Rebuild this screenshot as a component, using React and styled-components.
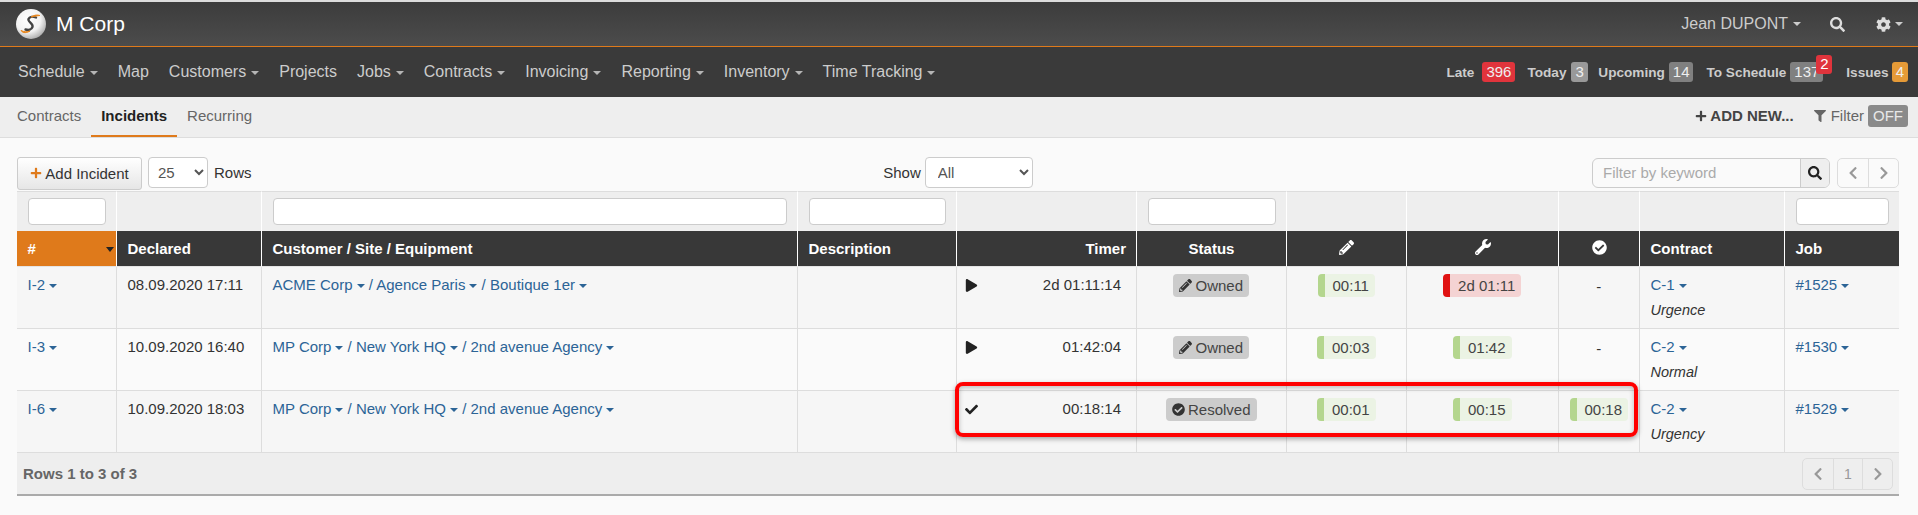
import React from "react";
import styled, { createGlobalStyle } from "styled-components";
import { FaPencilAlt, FaWrench, FaCheckCircle, FaSearch, FaCog, FaPlay, FaCheck, FaPlus, FaFilter, FaChevronLeft, FaChevronRight } from "react-icons/fa";

const Global = createGlobalStyle`
  html, body { margin: 0; padding: 0; height: 515px; overflow: hidden; background: #fafafa; }
  body { font-family: "Liberation Sans", Arial, sans-serif; font-size: 15px; color: #333; }
  * { box-sizing: border-box; }
`;

const Page = styled.div`
  width: 1918px; height: 515px; border-top: 2px solid #dcdcdc; background: #fafafa; display: flex; flex-direction: column;
`;
const TopBar = styled.header`
  height: 45px; flex: none; display: flex; align-items: center; justify-content: space-between;
  background: linear-gradient(#3c3c3c, #4c4c4c); border-bottom: 1px solid #df7a1b; padding: 0 15px 0 16px; color: #ddd;
`;
const Brand = styled.div`
  display: flex; align-items: center; gap: 10px; color: #fff; font-size: 21px;
`;
const TopRight = styled.div`
  display: flex; align-items: center; font-size: 16px; color: #ccc;
`;
const Caret = styled.span`
  display: inline-block; width: 0; height: 0; vertical-align: middle; margin-left: ${p => p.$ml ?? 4}px;
  border-left: ${p => p.$s ?? 4}px solid transparent; border-right: ${p => p.$s ?? 4}px solid transparent;
  border-top: ${p => p.$s ?? 4}px solid ${p => p.$c ?? "currentColor"};
`;
const TopIcon = styled.span`
  display: inline-flex; align-items: center; margin-left: ${p => p.$ml}px; font-size: 15px; color: #ddd;
`;
const NavBar = styled.nav`
  height: 50px; flex: none; background: #3a3a3a; display: flex; align-items: center; justify-content: space-between; padding: 0 10px 0 18px;
`;
const NavList = styled.div`
  display: flex; gap: 20px; font-size: 16px; color: #ccc;
`;
const NavItem = styled.span`
  white-space: nowrap;
`;
const Counters = styled.div`
  display: flex; align-items: center; position: relative; color: #ccc; font-weight: bold; font-size: 13.6px;
`;
const Counter = styled.span`
  display: flex; align-items: center; gap: ${p => p.$gap ?? 4}px; margin-left: ${p => p.$ml ?? 13}px; position: relative;
`;
const CountBadge = styled.span`
  display: inline-block; height: 20px; line-height: 20px; padding: 0 4px; border-radius: 3px; font-weight: normal; font-size: 15px; color: #eee;
  background: ${p => p.$bg};
`;
const SupBadge = styled.span`
  position: absolute; left: 110px; top: -7px; width: 16px; height: 19px; line-height: 18px; text-align: center; border-radius: 3px; background: #e0343c; color: #fff; font-weight: normal; font-size: 15px;
`;
const SubBar = styled.div`
  height: 41px; flex: none; background: #eee; border-bottom: 1px solid #ddd; display: flex; justify-content: space-between; padding: 0 10px 0 7px; align-items: stretch;
`;
const Tabs = styled.div`
  display: flex; 
`;
const Tab = styled.div`
  padding: 0 10px; line-height: 37px; height: 40px; color: ${p => p.$active ? "#222" : "#666"}; font-weight: ${p => p.$active ? "bold" : "normal"};
  border-bottom: 2px solid ${p => p.$active ? "#df7a1b" : "transparent"}; 
`;
const SubActions = styled.div`
  display: flex; align-items: center; color: #555; padding-bottom: 3px;
`;
const AddNew = styled.span`
  display: flex; align-items: center; gap: 3px; font-weight: bold; font-size: 15px; color: #444; margin-right: 20px;
`;
const FilterToggle = styled.span`
  display: flex; align-items: center; gap: 5px; color: #666; font-size: 15px; margin-right: 4px;
`;
const OffPill = styled.span`
  height: 22px; width: 40px; line-height: 22px; text-align: center; background: #8a8a8a; color: #e8e8e8; border-radius: 3px; font-size: 15px;
`;
const Content = styled.main`
  padding: 19px 19px 0 17px; display: flex; flex-direction: column;
`;
const Toolbar = styled.div`
  display: grid; grid-template-columns: 1fr auto 1fr; height: 33px; align-items: start; margin-bottom: 1px;
`;
const ToolGroup = styled.div`
  display: flex; align-items: center; gap: ${p => p.$gap ?? 6}px; justify-content: ${p => p.$end ? "flex-end" : "flex-start"}; height: 31px;
`;
const AddButton = styled.button`
  width: 125px; height: 33px; display: flex; align-items: center; justify-content: center; gap: 3px; font: 15px "Liberation Sans", Arial, sans-serif; color: #333;
  border: 1px solid #ccc; border-radius: 3px; background: linear-gradient(#fff, #e6e6e6); padding: 0; margin-top: 1px;
  svg { color: #df7a1b; }
`;
const Select = styled.select`
  width: ${p => p.$w}px; height: 31px; font: 15px "Liberation Sans", Arial, sans-serif; color: #555; background: #fff; border: 1px solid #ccc; border-radius: 4px; padding: 0 6px 0 ${p => p.$pl ?? 8}px;
`;
const SearchGroup = styled.div`
  display: flex; width: 238px; height: 30px; border: 1px solid #ccc; border-radius: 6px; overflow: hidden; background: #fafafa; margin-right: 7px;
`;
const SearchInput = styled.input`
  flex: 1; min-width: 0; border: 0; background: transparent; padding: 0 10px; font: 15px "Liberation Sans", Arial, sans-serif;
  &::placeholder { color: #aaa; }
`;
const SearchBtn = styled.span`
  width: 29px; display: flex; align-items: center; justify-content: center; border-left: 1px solid #ccc; background: #eee; color: #222; font-size: 14px;
`;
const Pager = styled.div`
  display: flex; height: ${p => p.$h}px; border: 1px solid #ddd; border-radius: 5px; overflow: hidden; background: ${p => p.$bg ?? "#fafafa"};
`;
const PagerCell = styled.span`
  width: ${p => p.$w}px; display: flex; align-items: center; justify-content: center; color: #999; font-size: 14px;
  & + & { border-left: 1px solid #ddd; }
`;
const TableWrap = styled.div`
  position: relative; width: 1882px;
`;
const Table = styled.table`
  width: 1882px; table-layout: fixed; border-collapse: separate; border-spacing: 0;
`;
const Col = styled.col`
  width: ${p => p.$w}px;
`;
const FilterCell = styled.th`
  height: 40px; padding: 6px 10px 0 10.5px; vertical-align: top; background: #eee; border-top: 1px solid #ddd; border-right: 1px solid #fff;
  &:last-child { border-right: 0; }
`;
const FilterInput = styled.input`
  display: block; width: 100%; height: 27px; border: 1px solid #ccc; border-radius: 4px; background: #fff;
`;
const Head = styled.th`
  height: 36px; padding: 0 ${p => p.$right ? 10 : 10.5}px; background: ${p => p.$active ? "#df7a1b" : "#383838"}; color: #fff; font-size: 15px; font-weight: bold;
  text-align: ${p => p.$align ?? "left"}; border-right: 1px solid #fff; border-bottom: 1px solid #e4e4e4; position: relative;
  &:last-child { border-right: 0; }
`;
const SortCaret = styled.span`
  position: absolute; right: 2px; top: 16px; width: 0; height: 0; border-left: 4px solid transparent; border-right: 4px solid transparent; border-top: 5px solid #222;
`;
const Row = styled.tr`
  background: ${p => p.$alt ? "#fafafa" : "#f6f6f6"};
`;
const Cell = styled.td`
  height: 62px; padding: 7px 11px 0 10.5px; vertical-align: top; line-height: 22px; border-bottom: 1px solid #ddd; border-right: 1px solid #ddd; font-size: 15px; white-space: nowrap;
  text-align: ${p => p.$align ?? "left"};
  &:last-child { border-right: 0; }
`;
const Link = styled.span`
  color: #2c6496;
`;
const TimerBox = styled.div`
  display: flex; justify-content: space-between; align-items: center; padding: 0 4px 0 0; margin-left: -3px; height: 22px;
  svg { font-size: 13px; color: #222; }
`;
const Status = styled.span`
  display: inline-flex; align-items: center; gap: 3px; height: 23px; padding: 0 6px; background: #ccc; border-radius: 4px; color: #444; svg { font-size: 13px; color: #333; }
`;
const Duration = styled.span`
  display: inline-block; height: 23px; line-height: 23px; padding: 0 6px 0 8px; border-left: 7px solid ${p => p.$late ? "#e01212" : "#b4d68e"};
  border-radius: 4px; background: ${p => p.$late ? "#f4d3d3" : "#ebf3e4"}; color: #444;
`;
const ContractType = styled.em`
  display: block; margin-top: 3px; font-size: 14.5px; color: #333;
`;
const Dash = styled.span`
  position: relative; top: 2px;
`;
const Highlight = styled.div`
  position: absolute; left: 938px; top: 191px; width: 683px; height: 55px; border: 4px solid #f00; border-radius: 8px; pointer-events: none;
  box-shadow: 0 2px 5px rgba(0,0,0,.35), inset 0 2px 5px rgba(0,0,0,.25);
`;
const Footer = styled.div`
  width: 1882px; height: 43px; background: #eee; border-bottom: 2px solid #aaa; display: flex; align-items: center; justify-content: space-between; padding: 0 6px 0 6px;
`;
const RowsInfo = styled.span`
  font-weight: bold; font-size: 15px; color: #666; 
`;

const Logo = () => (
  <svg width="30" height="30" viewBox="0 0 30 30">
    <defs>
      <radialGradient id="lg" cx="40%" cy="35%" r="70%">
        <stop offset="0%" stopColor="#fff" />
        <stop offset="60%" stopColor="#f2f2f2" />
        <stop offset="100%" stopColor="#a8a8a8" />
      </radialGradient>
    </defs>
    <circle cx="15" cy="15" r="15" fill="url(#lg)" />
    <path d="M20 8.5c-3-1.2-6.5-.8-7.5 1.5-1 3 5 4.5 4 8-.8 2.6-4 3.3-7 2.5" fill="none" stroke="#444" strokeWidth="2.4" strokeLinecap="round" />
    <path d="M15 8c3-2 6-2.5 9-1.5-3 .2-5 .8-9 1.5z" fill="#e8871e" stroke="#e8871e" strokeWidth="1" />
    <path d="M5 21.5c3 1.5 6 1.5 9 .5-3 2-7 2.5-9-.5z" fill="#e8871e" stroke="#e8871e" strokeWidth="1" />
  </svg>
);

const C = () => <Caret $ml={4} $s={4} $c="#2c6496" />;
const widths = [100, 145, 536, 159, 180, 150, 120, 152, 81, 145, 114];
const navs = [["Schedule", 1], ["Map"], ["Customers", 1], ["Projects"], ["Jobs", 1], ["Contracts", 1], ["Invoicing", 1], ["Reporting", 1], ["Inventory", 1], ["Time Tracking", 1]];
const rows = [
  { id: "I-2", date: "08.09.2020 17:11", path: ["ACME Corp", "Agence Paris", "Boutique 1er"], timer: "2d 01:11:14", state: "Owned", a: "00:11", b: "2d 01:11", late: true, c: null, con: "C-1", type: "Urgence", job: "#1525" },
  { id: "I-3", date: "10.09.2020 16:40", path: ["MP Corp", "New York HQ", "2nd avenue Agency"], timer: "01:42:04", state: "Owned", a: "00:03", b: "01:42", c: null, con: "C-2", type: "Normal", job: "#1530", alt: true },
  { id: "I-6", date: "10.09.2020 18:03", path: ["MP Corp", "New York HQ", "2nd avenue Agency"], timer: "00:18:14", state: "Resolved", a: "00:01", b: "00:15", c: "00:18", con: "C-2", type: "Urgency", job: "#1529", done: true },
];

export default function App() {
  return (
    <Page>
      <Global />
      <TopBar>
        <Brand><Logo />M Corp</Brand>
        <TopRight>
          Jean DUPONT<Caret $ml={5} />
          <TopIcon $ml={29}><FaSearch /></TopIcon>
          <TopIcon $ml={31}><FaCog /></TopIcon><Caret $ml={4} />
        </TopRight>
      </TopBar>
      <NavBar>
        <NavList>
          {navs.map(([n, c]) => <NavItem key={n}>{n}{c && <Caret $ml={5} $c="#b5b5b5" />}</NavItem>)}
        </NavList>
        <Counters>
          <Counter $gap={8}>Late <CountBadge $bg="#e0343c">396</CountBadge></Counter>
          <Counter $gap={5} $ml={12}>Today <CountBadge $bg="#999">3</CountBadge></Counter>
          <Counter $ml={10.5}>Upcoming <CountBadge $bg="#808080">14</CountBadge></Counter>
          <Counter>To Schedule <CountBadge $bg="#808080">137</CountBadge><SupBadge>2</SupBadge></Counter>
          <Counter $ml={23} $gap={3}>Issues <CountBadge $bg="#e59a37">4</CountBadge></Counter>
        </Counters>
      </NavBar>
      <SubBar>
        <Tabs>
          <Tab>Contracts</Tab>
          <Tab $active>Incidents</Tab>
          <Tab>Recurring</Tab>
        </Tabs>
        <SubActions>
          <AddNew><FaPlus size={12} />ADD NEW...</AddNew>
          <FilterToggle><FaFilter size={12} />Filter</FilterToggle>
          <OffPill>OFF</OffPill>
        </SubActions>
      </SubBar>
      <Content>
        <Toolbar>
          <ToolGroup>
            <AddButton><FaPlus size={12} />Add Incident</AddButton>
            <Select $w={60} $pl={5} defaultValue="25"><option>25</option></Select>
            Rows
          </ToolGroup>
          <ToolGroup $gap={4}>
            Show
            <Select $w={108} defaultValue="All"><option>All</option></Select>
          </ToolGroup>
          <ToolGroup $end $gap={0}>
            <SearchGroup>
              <SearchInput placeholder="Filter by keyword" />
              <SearchBtn><FaSearch /></SearchBtn>
            </SearchGroup>
            <Pager $h={30}>
              <PagerCell $w={30}><FaChevronLeft /></PagerCell>
              <PagerCell $w={30}><FaChevronRight /></PagerCell>
            </Pager>
          </ToolGroup>
        </Toolbar>
        <TableWrap>
          <Table>
            <colgroup>{widths.map((w, i) => <Col key={i} $w={w} />)}</colgroup>
            <thead>
              <tr>
                <FilterCell><FilterInput /></FilterCell>
                <FilterCell />
                <FilterCell><FilterInput /></FilterCell>
                <FilterCell><FilterInput /></FilterCell>
                <FilterCell />
                <FilterCell><FilterInput /></FilterCell>
                <FilterCell /><FilterCell /><FilterCell /><FilterCell />
                <FilterCell><FilterInput /></FilterCell>
              </tr>
              <tr>
                <Head $active># <SortCaret /></Head>
                <Head>Declared</Head>
                <Head>Customer / Site / Equipment</Head>
                <Head>Description</Head>
                <Head $align="right" $right>Timer</Head>
                <Head $align="center">Status</Head>
                <Head $align="center"><FaPencilAlt size={15} /></Head>
                <Head $align="center"><FaWrench size={16} /></Head>
                <Head $align="center"><FaCheckCircle size={15} /></Head>
                <Head>Contract</Head>
                <Head>Job</Head>
              </tr>
            </thead>
            <tbody>
              {rows.map(r => (
                <Row key={r.id} $alt={r.alt}>
                  <Cell><Link>{r.id}<C /></Link></Cell>
                  <Cell>{r.date}</Cell>
                  <Cell>
                    <Link>{r.path[0]}<C /> / {r.path[1]}<C /> / {r.path[2]}<C /></Link>
                  </Cell>
                  <Cell />
                  <Cell>
                    <TimerBox>{r.done ? <FaCheck /> : <FaPlay />}<span>{r.timer}</span></TimerBox>
                  </Cell>
                  <Cell $align="center">
                    <Status>{r.done ? <FaCheckCircle /> : <FaPencilAlt />}{r.state}</Status>
                  </Cell>
                  <Cell $align="center"><Duration>{r.a}</Duration></Cell>
                  <Cell $align="center"><Duration $late={r.late}>{r.b}</Duration></Cell>
                  <Cell $align="center">{r.c ? <Duration>{r.c}</Duration> : <Dash>-</Dash>}</Cell>
                  <Cell><Link>{r.con}<C /></Link><ContractType>{r.type}</ContractType></Cell>
                  <Cell><Link>{r.job}<C /></Link></Cell>
                </Row>
              ))}
            </tbody>
          </Table>
          <Highlight />
        </TableWrap>
        <Footer>
          <RowsInfo>Rows 1 to 3 of 3</RowsInfo>
          <Pager $h={32} $bg="#eee">
            <PagerCell $w={30}><FaChevronLeft /></PagerCell>
            <PagerCell $w={29}>1</PagerCell>
            <PagerCell $w={30}><FaChevronRight /></PagerCell>
          </Pager>
        </Footer>
      </Content>
    </Page>
  );
}
